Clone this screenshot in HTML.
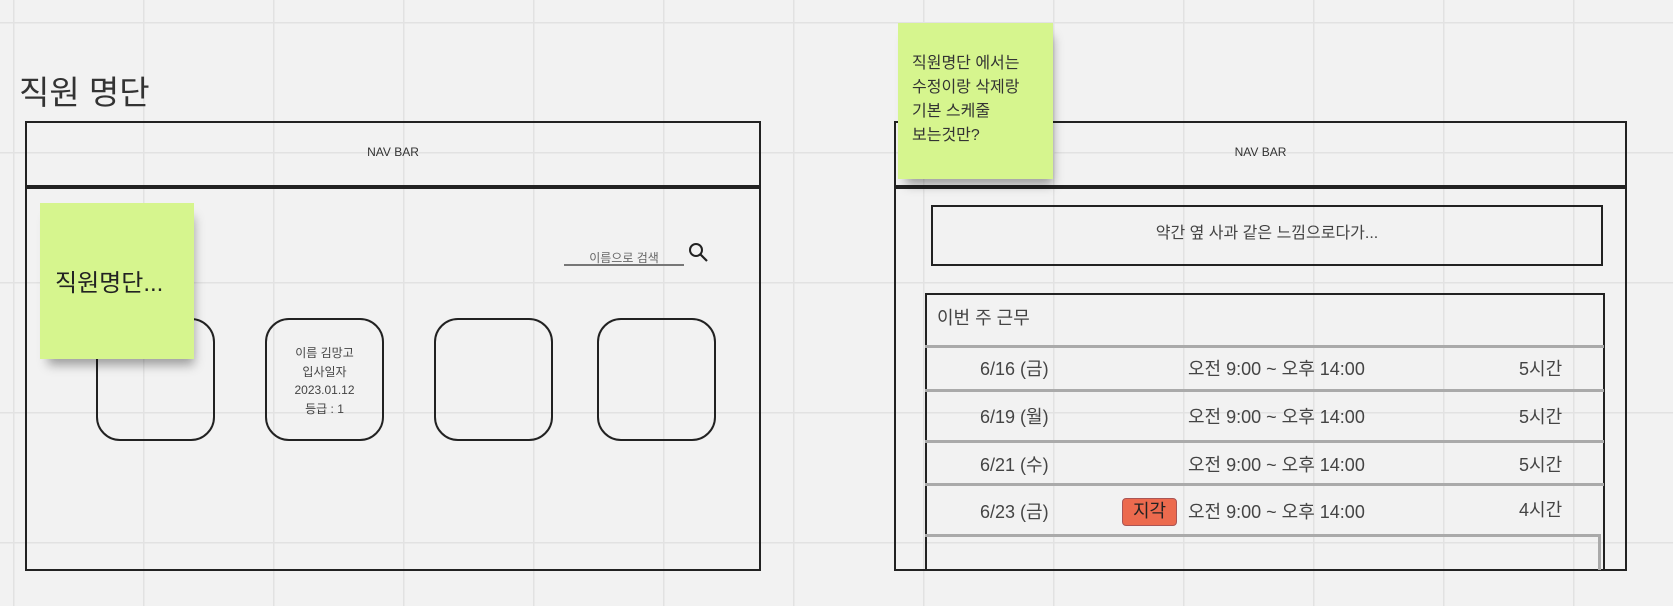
<!DOCTYPE html>
<html><head><meta charset="utf-8"><style>
body{margin:0;width:1673px;height:606px;overflow:hidden;background:#f2f2f2;font-family:"Liberation Sans","Noto Sans CJK KR",sans-serif;color:#333;position:relative;
background-image:linear-gradient(to right,#e2e2e2 1.5px,transparent 1.5px),linear-gradient(to bottom,#e2e2e2 1.5px,transparent 1.5px);
background-size:130px 130px;background-position:13px 22px;}
.a{position:absolute}
.box{position:absolute;border:2.5px solid #222;box-sizing:border-box}
.card{position:absolute;border:2.5px solid #222;border-radius:24px;box-sizing:border-box;top:318px;width:119px;height:123px}
.sticky{position:absolute;background:#d6f58e;box-shadow:4px 10px 10px -4px rgba(0,0,0,.35)}
.row{position:absolute;left:925px;width:679px;border-top:3px solid #aaa;font-size:18px;color:#444}
.row span{position:absolute}
</style></head><body>
<div class="a" style="left:19px;top:66px;font-size:33px;color:#333">직원 명단</div>
<div class="box" style="left:25px;top:121px;width:736px;height:450px"></div>
<div class="a" style="left:25px;top:185px;width:736px;height:4px;background:#222"></div>
<div class="a" style="left:25px;top:145px;width:736px;text-align:center;font-size:12px">NAV BAR</div>
<div class="card" style="left:96px"></div>
<div class="card" style="left:265px;font-size:12px;text-align:center;line-height:18.5px;padding-top:24px;color:#444">이름 김망고<br>입사일자<br>2023.01.12<br>등급 : 1</div>
<div class="card" style="left:434px"></div>
<div class="card" style="left:597px"></div>
<div class="a" style="left:564px;top:249px;width:120px;text-align:center;font-size:12px;color:#666">이름으로 검색</div>
<div class="a" style="left:564px;top:264px;width:120px;height:2px;background:#777"></div>
<svg class="a" style="left:688px;top:242px" width="22" height="22" viewBox="0 0 22 22"><circle cx="8" cy="8" r="6" fill="none" stroke="#222" stroke-width="2"/><line x1="12.5" y1="12.5" x2="19" y2="19" stroke="#222" stroke-width="2.2"/></svg>
<div class="sticky" style="left:40px;top:203px;width:154px;height:156px"><div class="a" style="left:15px;top:60px;font-size:24px;color:#222">직원명단...</div></div>

<div class="box" style="left:894px;top:121px;width:733px;height:450px"></div>
<div class="a" style="left:894px;top:185px;width:733px;height:4px;background:#222"></div>
<div class="a" style="left:894px;top:145px;width:733px;text-align:center;font-size:12px">NAV BAR</div>
<div class="box" style="left:931px;top:205px;width:672px;height:61px;text-align:center;font-size:16px;line-height:54px;color:#444">약간 옆 사과 같은 느낌으로다가...</div>
<div class="box" style="left:925px;top:293px;width:680px;height:278px"></div>
<div class="a" style="left:937px;top:304px;font-size:18px;color:#444">이번 주 근무</div>
<div class="row" style="top:345px;height:44px"><span style="left:55px;top:7px">6/16 (금)</span><span style="left:263px;top:7px">오전 9:00 ~ 오후 14:00</span><span style="left:594px;top:7px">5시간</span></div>
<div class="row" style="top:389px;height:51px"><span style="left:55px;top:11px">6/19 (월)</span><span style="left:263px;top:11px">오전 9:00 ~ 오후 14:00</span><span style="left:594px;top:11px">5시간</span></div>
<div class="row" style="top:440px;height:43px"><span style="left:55px;top:8px">6/21 (수)</span><span style="left:263px;top:8px">오전 9:00 ~ 오후 14:00</span><span style="left:594px;top:8px">5시간</span></div>
<div class="row" style="top:483px;height:51px"><span style="left:55px;top:12px">6/23 (금)</span><span style="left:263px;top:12px">오전 9:00 ~ 오후 14:00</span><span style="left:594px;top:10px">4시간</span></div>
<div class="a" style="left:1122px;top:498px;width:55px;height:28px;background:#ec6a4e;border:1.5px solid #a55;border-radius:4px;box-sizing:border-box;text-align:center;font-size:18px;line-height:24px;color:#222">지각</div>
<div class="a" style="left:925px;top:534px;width:676px;height:36px;border-top:3px solid #aaa;border-right:3px solid #aaa;box-sizing:border-box"></div>
<div class="sticky" style="left:898px;top:23px;width:155px;height:156px"><div class="a" style="left:14px;top:29px;font-size:16px;line-height:24px;color:#333">직원명단 에서는<br>수정이랑 삭제랑<br>기본 스케줄<br>보는것만?</div></div>
</body></html>
